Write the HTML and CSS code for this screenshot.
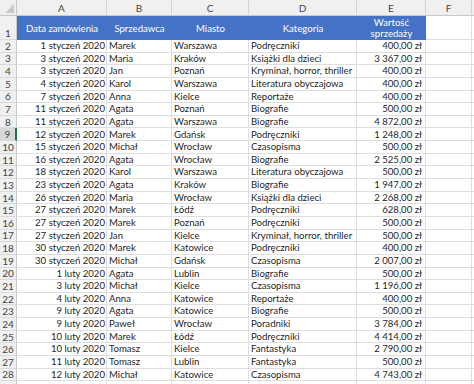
FILE: index.html
```html
<!DOCTYPE html>
<html lang="pl">
<head>
<meta charset="utf-8">
<link rel="stylesheet" href="styles.css">
</head>
<body>
<div class="sheet">
  <div class="corner"><span class="tri"></span></div>
  <div class="colh">A</div><div class="colh">B</div><div class="colh">C</div><div class="colh">D</div><div class="colh">E</div><div class="colh">F</div><div class="colh last"></div>

  <div class="rowh hdr">1</div>
  <div class="th">Data zamówienia</div><div class="th">Sprzedawca</div><div class="th">Miasto</div><div class="th">Kategoria</div><div class="th two">Wartość<br>sprzedaży</div><div class="c"></div><div class="c"></div>

  <div class="rowh">2</div><div class="c r">1 styczeń 2020</div><div class="c">Marek</div><div class="c">Warszawa</div><div class="c">Podręczniki</div><div class="c r m">400,00 zł</div><div class="c"></div><div class="c"></div>
  <div class="rowh">3</div><div class="c r">3 styczeń 2020</div><div class="c">Maria</div><div class="c">Kraków</div><div class="c">Książki dla dzieci</div><div class="c r m">3 367,00 zł</div><div class="c"></div><div class="c"></div>
  <div class="rowh">4</div><div class="c r">3 styczeń 2020</div><div class="c">Jan</div><div class="c">Poznań</div><div class="c">Kryminał, horror, thriller</div><div class="c r m">400,00 zł</div><div class="c"></div><div class="c"></div>
  <div class="rowh">5</div><div class="c r">4 styczeń 2020</div><div class="c">Karol</div><div class="c">Warszawa</div><div class="c">Literatura obyczajowa</div><div class="c r m">400,00 zł</div><div class="c"></div><div class="c"></div>
  <div class="rowh">6</div><div class="c r">7 styczeń 2020</div><div class="c">Anna</div><div class="c">Kielce</div><div class="c">Reportaże</div><div class="c r m">400,00 zł</div><div class="c"></div><div class="c"></div>
  <div class="rowh">7</div><div class="c r">11 styczeń 2020</div><div class="c">Agata</div><div class="c">Poznań</div><div class="c">Biografie</div><div class="c r m">500,00 zł</div><div class="c"></div><div class="c"></div>
  <div class="rowh">8</div><div class="c r">11 styczeń 2020</div><div class="c">Agata</div><div class="c">Warszawa</div><div class="c">Biografie</div><div class="c r m">4 872,00 zł</div><div class="c"></div><div class="c"></div>
  <div class="rowh sel">9</div><div class="c r">12 styczeń 2020</div><div class="c">Marek</div><div class="c">Gdańsk</div><div class="c">Podręczniki</div><div class="c r m">1 248,00 zł</div><div class="c"></div><div class="c"></div>
  <div class="rowh">10</div><div class="c r">15 styczeń 2020</div><div class="c">Michał</div><div class="c">Wrocław</div><div class="c">Czasopisma</div><div class="c r m">500,00 zł</div><div class="c"></div><div class="c"></div>
  <div class="rowh">11</div><div class="c r">16 styczeń 2020</div><div class="c">Agata</div><div class="c">Wrocław</div><div class="c">Biografie</div><div class="c r m">2 525,00 zł</div><div class="c"></div><div class="c"></div>
  <div class="rowh">12</div><div class="c r">18 styczeń 2020</div><div class="c">Karol</div><div class="c">Warszawa</div><div class="c">Literatura obyczajowa</div><div class="c r m">500,00 zł</div><div class="c"></div><div class="c"></div>
  <div class="rowh">13</div><div class="c r">23 styczeń 2020</div><div class="c">Agata</div><div class="c">Kraków</div><div class="c">Biografie</div><div class="c r m">1 947,00 zł</div><div class="c"></div><div class="c"></div>
  <div class="rowh">14</div><div class="c r">26 styczeń 2020</div><div class="c">Maria</div><div class="c">Wrocław</div><div class="c">Książki dla dzieci</div><div class="c r m">2 268,00 zł</div><div class="c"></div><div class="c"></div>
  <div class="rowh">15</div><div class="c r">27 styczeń 2020</div><div class="c">Marek</div><div class="c">Łódź</div><div class="c">Podręczniki</div><div class="c r m">628,00 zł</div><div class="c"></div><div class="c"></div>
  <div class="rowh">16</div><div class="c r">27 styczeń 2020</div><div class="c">Marek</div><div class="c">Poznań</div><div class="c">Podręczniki</div><div class="c r m">500,00 zł</div><div class="c"></div><div class="c"></div>
  <div class="rowh">17</div><div class="c r">27 styczeń 2020</div><div class="c">Jan</div><div class="c">Kielce</div><div class="c">Kryminał, horror, thriller</div><div class="c r m">500,00 zł</div><div class="c"></div><div class="c"></div>
  <div class="rowh">18</div><div class="c r">30 styczeń 2020</div><div class="c">Marek</div><div class="c">Katowice</div><div class="c">Podręczniki</div><div class="c r m">400,00 zł</div><div class="c"></div><div class="c"></div>
  <div class="rowh">19</div><div class="c r">30 styczeń 2020</div><div class="c">Michał</div><div class="c">Gdańsk</div><div class="c">Czasopisma</div><div class="c r m">2 007,00 zł</div><div class="c"></div><div class="c"></div>
  <div class="rowh">20</div><div class="c r">1 luty 2020</div><div class="c">Agata</div><div class="c">Lublin</div><div class="c">Biografie</div><div class="c r m">500,00 zł</div><div class="c"></div><div class="c"></div>
  <div class="rowh">21</div><div class="c r">3 luty 2020</div><div class="c">Michał</div><div class="c">Kielce</div><div class="c">Czasopisma</div><div class="c r m">1 196,00 zł</div><div class="c"></div><div class="c"></div>
  <div class="rowh">22</div><div class="c r">4 luty 2020</div><div class="c">Anna</div><div class="c">Katowice</div><div class="c">Reportaże</div><div class="c r m">400,00 zł</div><div class="c"></div><div class="c"></div>
  <div class="rowh">23</div><div class="c r">9 luty 2020</div><div class="c">Agata</div><div class="c">Katowice</div><div class="c">Biografie</div><div class="c r m">500,00 zł</div><div class="c"></div><div class="c"></div>
  <div class="rowh">24</div><div class="c r">9 luty 2020</div><div class="c">Paweł</div><div class="c">Wrocław</div><div class="c">Poradniki</div><div class="c r m">3 784,00 zł</div><div class="c"></div><div class="c"></div>
  <div class="rowh">25</div><div class="c r">10 luty 2020</div><div class="c">Marek</div><div class="c">Łódź</div><div class="c">Podręczniki</div><div class="c r m">4 414,00 zł</div><div class="c"></div><div class="c"></div>
  <div class="rowh">26</div><div class="c r">10 luty 2020</div><div class="c">Tomasz</div><div class="c">Kielce</div><div class="c">Fantastyka</div><div class="c r m">2 790,00 zł</div><div class="c"></div><div class="c"></div>
  <div class="rowh">27</div><div class="c r">11 luty 2020</div><div class="c">Tomasz</div><div class="c">Lublin</div><div class="c">Fantastyka</div><div class="c r m">500,00 zł</div><div class="c"></div><div class="c"></div>
  <div class="rowh">28</div><div class="c r">12 luty 2020</div><div class="c">Michał</div><div class="c">Katowice</div><div class="c">Czasopisma</div><div class="c r m">4 743,00 zł</div><div class="c"></div><div class="c"></div>
  <div class="rowh"></div><div class="c"></div><div class="c"></div><div class="c"></div><div class="c"></div><div class="c"></div><div class="c"></div><div class="c"></div>
</div>
</body>
</html>
```

FILE: styles.css
```css
html, body {
  margin: 0;
  padding: 0;
  background: #ffffff;
  overflow: hidden;
}

.sheet {
  display: grid;
  grid-template-columns: 17px 90px 65px 77px 108px 69px 46px 20px;
  grid-template-rows: 16px 24px;
  grid-auto-rows: 12.65px;
  width: 492px;
  font-family: Lato, "Liberation Sans", sans-serif;
  font-size: 9.6px;
  color: #1f1f1f;
}

.corner {
  position: relative;
  background: #f0f0f0;
  border-right: 1px solid #c8c8c8;
  border-bottom: 1px solid #c8c8c8;
}

.tri {
  position: absolute;
  right: 2px;
  bottom: 2px;
  width: 0;
  height: 0;
  border-left: 9px solid transparent;
  border-bottom: 9px solid #c9c9c9;
}

.colh {
  background: #f0f0f0;
  border-right: 1px solid #d4d4d4;
  border-bottom: 1px solid #c8c8c8;
  color: #444444;
  font-size: 10px;
  display: flex;
  align-items: center;
  justify-content: center;
  line-height: 1;
}

.rowh {
  background: #f0f0f0;
  border-right: 1px solid #c8c8c8;
  border-bottom: 1px solid #dadada;
  color: #444444;
  font-size: 10px;
  display: flex;
  align-items: center;
  justify-content: center;
  line-height: 1;
  overflow: hidden;
}

.rowh.hdr {
  align-items: flex-end;
  padding-bottom: 1px;
}

.rowh.sel {
  background: #d8d8d8;
  border-right: 2px solid #217346;
  color: #444444;
}

.th {
  background: #4472c4;
  color: #ffffff;
  display: flex;
  align-items: center;
  justify-content: center;
  text-align: center;
  line-height: 11px;
  white-space: nowrap;
}

.c {
  border-right: 1px solid #dedede;
  border-bottom: 1px solid #dedede;
  display: flex;
  align-items: center;
  padding: 0 2px;
  white-space: nowrap;
  overflow: visible;
  line-height: 1;
  min-width: 0;
}

.c.r {
  justify-content: flex-end;
  padding-right: 1px;
}

.c.m {
  padding-right: 3px;
}
```
